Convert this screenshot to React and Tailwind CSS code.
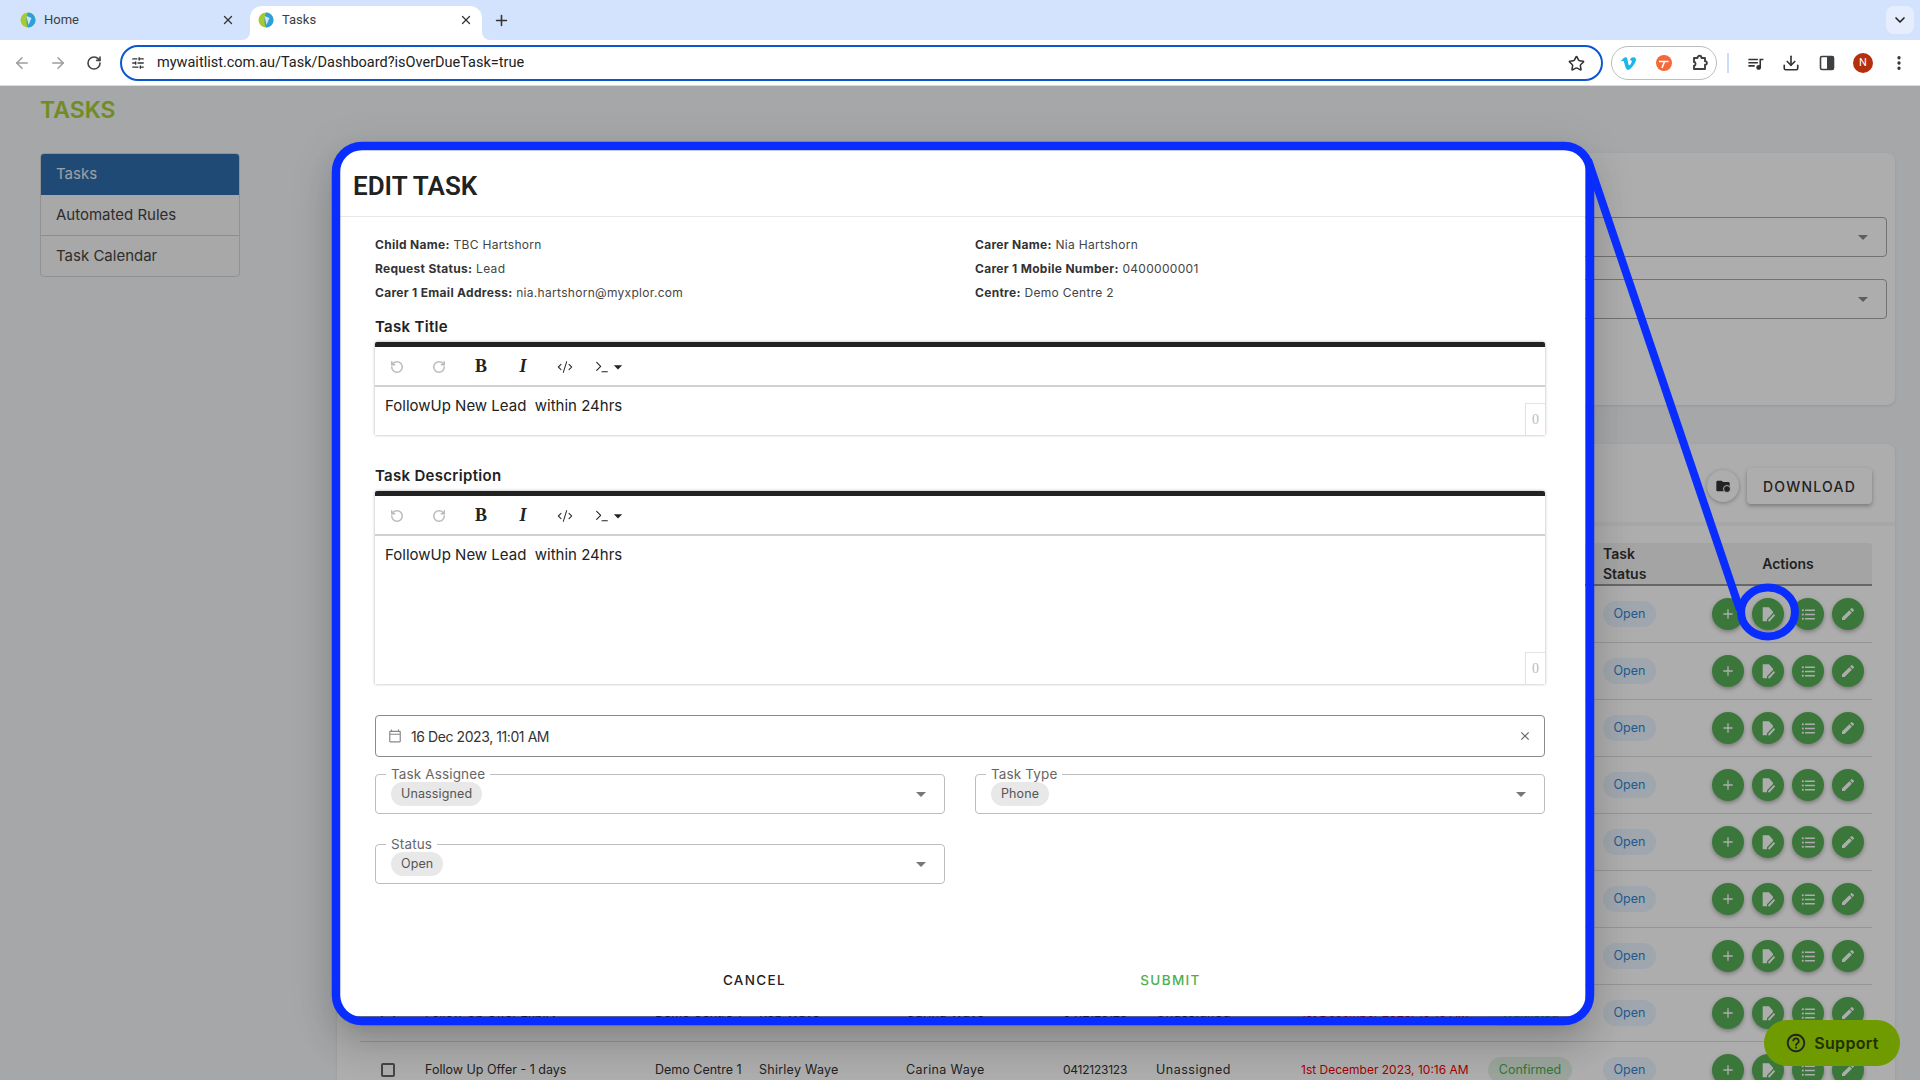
import React from "react";
import { ArrowLeft, ArrowRight, RotateCw, RotateCcw, X, Plus, Star, ChevronDown, Download, EllipsisVertical, SlidersHorizontal, CodeXml, Terminal } from "lucide-react";
import { MdAdd, MdFormatListBulleted, MdEdit, MdArrowDropDown, MdClose, MdFolder, MdOutlineCalendarToday, MdHelpOutline, MdQueueMusic } from "react-icons/md";
import { FaVimeoV } from "react-icons/fa";

const Favicon = () => (
  <svg viewBox="0 0 16 16" className="w-4 h-4 shrink-0">
    <circle cx="8" cy="8" r="7.5" fill="#a8c92f" />
    <path d="M8 .5a7.5 7.5 0 0 1 0 15c-2-3-2-11 0-15z" fill="#2f9fd8" />
    <path d="M6.5 4l5 2-3 7z" fill="#fff" opacity=".75" />
  </svg>
);

const Tab = ({ title, active }) => (
  <div className={`relative flex items-center w-[232px] h-[34px] rounded-t-xl pl-2 pr-2 pb-[6px] ${active ? "bg-white" : ""}`}>
    {active && (
      <>
        <div className="absolute bottom-0 -left-2 w-2 h-2 bg-white"><div className="w-2 h-2 bg-[#d3e3fd] rounded-br-lg" /></div>
        <div className="absolute bottom-0 -right-2 w-2 h-2 bg-white"><div className="w-2 h-2 bg-[#d3e3fd] rounded-bl-lg" /></div>
      </>
    )}
    <Favicon />
    <span className="ml-2 text-[13px] text-[#3c4043] flex-1 font-['Roboto',sans-serif]">{title}</span>
    <X className="w-[14px] h-[14px] text-[#333] mr-[1px]" strokeWidth={2.2} />
  </div>
);

const ToolIcon = ({ children }) => <div className="w-9 h-9 flex items-center justify-center shrink-0">{children}</div>;

const Chrome = () => (
  <div className="font-['Roboto',sans-serif]">
    <div className="h-10 bg-[#d3e3fd] flex items-end pl-3 relative">
      <div className="mr-[6px]"><Tab title="Home" /></div>
      <Tab title="Tasks" active />
      <Plus className="w-[17px] h-[17px] ml-[11px] mb-[11px] text-[#333]" strokeWidth={2.2} />
      <div className="ml-auto mr-[6px] mb-[6px] w-7 h-7 rounded-lg bg-[#e6eefd] flex items-center justify-center">
        <ChevronDown className="w-4 h-4 text-[#222]" strokeWidth={2.5} />
      </div>
    </div>
    <div className="h-[46px] bg-white border-b border-[#dcdcdc] flex items-center pl-1 pt-[1px] relative">
      <ToolIcon><ArrowLeft className="w-[18px] h-[18px] text-[#9a9da1]" /></ToolIcon>
      <ToolIcon><ArrowRight className="w-[18px] h-[18px] text-[#9a9da1]" /></ToolIcon>
      <ToolIcon><RotateCw className="w-4 h-4 text-[#444]" strokeWidth={2.4} /></ToolIcon>
      <div className="ml-2 w-[1483px] h-9 border-2 border-[#0b57d0] rounded-full flex items-center pl-[9px] pr-[16px] shrink-0">
        <SlidersHorizontal className="w-[14px] h-[14px] text-[#333]" strokeWidth={2.2} />
        <span className="ml-3 text-[14.5px] text-[#202124] flex-1">mywaitlist.com.au/Task/Dashboard?isOverDueTask=true</span>
        <Star className="w-[17px] h-[17px] text-[#333]" strokeWidth={2.2} />
      </div>
      <div className="ml-2 w-[106px] h-[34px] border border-[#bdbdbd] rounded-full flex items-center justify-between pl-2 pr-[7px] shrink-0">
        <FaVimeoV className="w-[17px] h-[17px] text-[#1ab7ea]" />
        <svg viewBox="0 0 16 16" className="w-4 h-4">
          <circle cx="8" cy="8" r="8" fill="#f4683a" />
          <path d="M3 6.5h9.5M8.5 6.5L6 13" stroke="#fff" strokeWidth="1.6" fill="none" />
        </svg>
        <svg viewBox="0 0 18 18" className="w-[18px] h-[18px]" fill="none" stroke="#3c4043" strokeWidth="1.9">
          <path d="M3 4h3.5c0-3 4-3 4 0H14v3.2c2.5-.3 2.5 3.9 0 3.6V15H3v-3.2c2 .3 2-4.2 0-3.8z" strokeLinejoin="round" />
        </svg>
      </div>
      <div className="ml-[10px] mr-[8px] w-[2px] h-5 bg-[#c9dafb]" />
      <ToolIcon><MdQueueMusic className="w-[19px] h-[19px] text-[#333]" /></ToolIcon>
      <ToolIcon><Download className="w-[18px] h-[18px] text-[#333]" strokeWidth={2.2} /></ToolIcon>
      <ToolIcon>
        <svg viewBox="0 0 16 16" className="w-4 h-4"><rect x="1.5" y="1.5" width="13" height="13" rx="1.5" fill="#fff" stroke="#3c4043" strokeWidth="1.6" /><rect x="8" y="1.5" width="6.5" height="13" fill="#3c4043" /></svg>
      </ToolIcon>
      <ToolIcon><div className="w-5 h-5 rounded-full bg-[#b52e0e] text-white text-[11px] leading-5 text-center">N</div></ToolIcon>
      <ToolIcon><EllipsisVertical className="w-[18px] h-[18px] text-[#333]" strokeWidth={2.4} /></ToolIcon>
    </div>
  </div>
);

const hidden = Array.from({ length: 7 }).map(() => []);
const offer = ["Follow Up Offer Expiry", "Demo Centre 1", "Rob Waye", "Carina Waye", "0412123123", "Unassigned", "1st December 2023, 10:16 AM", "Waitlisted"];
const last = ["Follow Up Offer - 1 days", "Demo Centre 1", "Shirley Waye", "Carina Waye", "0412123123", "Unassigned", "1st December 2023, 10:16 AM", "Confirmed"];

const NoteIcon = () => (
  <svg viewBox="0 0 16 16" className="w-4 h-4" fill="#fff">
    <path d="M2.7 1.3H9l4 4.5v1.2L7 13.2v2H2.7z" />
    <path d="M8.6 15l5.9-6.3" stroke="#fff" strokeWidth="1.9" fill="none" />
  </svg>
);

const Round = ({ children }) => (
  <div className="w-8 h-8 rounded-full bg-[#58b058] flex items-center justify-center text-white shadow-[0_2px_4px_rgba(0,0,0,.3)]">{children}</div>
);

const Row = ({ r }) => (
  <div className="grid grid-cols-[65px_230px_104px_147px_157px_93px_145px_187px_115px_109px_160px] h-[57px] items-center border-b border-[#dcdcdc] text-[12.5px] text-[#333]">
    <div className="pl-[21px]">{r[0] && <div className="w-[14px] h-[14px] border-2 border-[#666] rounded-[2px]" />}</div>
    <div className="whitespace-nowrap overflow-hidden">{r[0]}</div>
    <div className="whitespace-nowrap">{r[1]}</div>
    <div className="tracking-[0.02em]">{r[2]}</div>
    <div className="tracking-[0.03em]">{r[3]}</div>
    <div className="text-[12px] tracking-[-0.02em]">{r[4]}</div>
    <div className="tracking-[0.04em]">{r[5]}</div>
    <div className="text-[#f00000] text-[12px] whitespace-nowrap">{r[6]}</div>
    <div>{r[7] && <span className="inline-flex h-[26px] w-[84px] items-center justify-center rounded-full bg-[#e4f2e5] text-[#4caf50]">{r[7]}</span>}</div>
    <div><span className="inline-flex h-[26px] w-[53px] items-center justify-center rounded-full bg-[#ebf5ff] text-[#2f86d6]">Open</span></div>
    <div className="flex gap-2">
      <Round><MdAdd className="w-4 h-4" /></Round>
      <Round><NoteIcon /></Round>
      <Round><MdFormatListBulleted className="w-[17px] h-[17px]" /></Round>
      <Round><MdEdit className="w-4 h-4" /></Round>
    </div>
  </div>
);

const BgSelect = () => (
  <div className="h-10 border border-[#a8a8a8] rounded flex items-center justify-end pr-[11px]">
    <MdArrowDropDown className="w-6 h-6 text-[#8a8a8a]" />
  </div>
);

const Background = () => (
  <div className="h-[994px] bg-[#f4f6f8] flex pl-10 pr-[25px] font-['Inter',sans-serif] overflow-hidden">
    <div className="w-[200px] shrink-0">
      <div className="mt-[11px] h-[27px] leading-[27px] text-[23px] font-semibold text-[#a8ce35]">TASKS</div>
      <div className="mt-[29px] rounded border border-[#d8d8d8] bg-[#f8f8f8] overflow-hidden text-[15px] text-[#444]">
        <div className="h-[41px] pl-[15px] flex items-center bg-[#306eae] text-[#e8edf2]">Tasks</div>
        <div className="h-[41px] pl-[15px] flex items-center border-b border-[#cfcfcf]">Automated Rules</div>
        <div className="h-[40px] pl-[15px] flex items-center">Task Calendar</div>
      </div>
    </div>
    <div className="ml-[97px] flex-1 pt-[67px]">
      <div className="h-[252px] bg-white rounded-lg pt-[64px] pr-2 flex flex-col gap-[22px] shadow-[0_1px_3px_rgba(0,0,0,.1)]">
        <BgSelect />
        <BgSelect />
      </div>
      <div className="mt-[39px] bg-white rounded-lg h-[700px] shadow-[0_1px_3px_rgba(0,0,0,.1)]">
        <div className="h-[82px] border-b-4 border-[#f6f6f6] flex items-start justify-end pt-6 pr-[23px] gap-2">
          <div className="relative w-8 h-8 mt-[2px] rounded-full bg-white shadow-[0_1px_4px_rgba(0,0,0,.3)] flex items-center justify-center">
            <MdFolder className="w-[16px] h-[16px] text-[#333]" />
            <div className="absolute left-[16px] top-[15px] w-2 h-2 rounded-full bg-[#333] border border-white" />
          </div>
          <div className="w-[125px] h-9 rounded bg-white shadow-[0_2px_4px_rgba(0,0,0,.3)] flex items-center justify-center text-[14px] font-medium tracking-[0.09em] text-[#333]">DOWNLOAD</div>
        </div>
        <div className="ml-[23px] mr-[23px] mt-[17px]">
          <div className="grid grid-cols-[1243px_109px_160px] h-[43px] items-center rounded-t bg-[#f2f2f2] border-b-2 border-[#999] text-[14px] font-semibold leading-[20px] text-[#333]">
            <div />
            <div className="w-[60px]">Task Status</div>
            <div className="text-center pr-2">Actions</div>
          </div>
          {hidden.map((r, i) => <Row key={i} r={r} />)}
          <Row r={offer} />
          <Row r={last} />
        </div>
      </div>
    </div>
  </div>
);

const TBtn = ({ children }) => <div className="w-[42px] h-full flex items-center justify-center shrink-0">{children}</div>;

const Editor = ({ h }) => (
  <div className="relative border-t-[5px] border-[#222] rounded-t-[2px] shadow-[0_0_3px_rgba(0,0,0,.35)]">
    <div className="h-[40px] flex items-center pl-[1px] pt-[1px] border-b-2 border-[#d0d0d0]">
      <TBtn><RotateCcw className="w-[14px] h-[14px] text-[#bbb]" strokeWidth={2.6} /></TBtn>
      <TBtn><RotateCw className="w-[14px] h-[14px] text-[#bbb]" strokeWidth={2.6} /></TBtn>
      <TBtn><span className="text-[18px] font-bold text-[#222] font-['Liberation_Serif',serif]">B</span></TBtn>
      <TBtn><span className="text-[18px] font-bold italic text-[#222] font-['Liberation_Serif',serif]">I</span></TBtn>
      <TBtn><CodeXml className="w-4 h-4 text-[#333]" strokeWidth={1.6} /></TBtn>
      <div className="flex items-center text-[#222] ml-[8px]">
        <Terminal className="w-[16px] h-[16px]" strokeWidth={1.6} />
        <MdArrowDropDown className="w-5 h-5 -ml-[2px]" />
      </div>
    </div>
    <div className={`${h} px-[10px] pt-[7px] text-[15px] leading-[24px] text-[#222] whitespace-pre`}>FollowUp New Lead  within 24hrs</div>
    <div className="absolute right-0 bottom-0 w-5 h-8 border-l border-t border-[#e2e2e2] text-center text-[14px] leading-8 text-[#bbb] font-['Liberation_Serif',serif]">0</div>
  </div>
);

const Select = ({ label, value }) => (
  <div className="relative h-10 border border-[#bdbdbd] rounded flex items-center pl-[15px] pr-[11px]">
    <div className="absolute -top-[9px] left-[10px] bg-white px-[5px] text-[13.5px] tracking-[0.01em] leading-4 text-[#666]">{label}</div>
    <div className="h-6 px-[10px] rounded-full bg-[#e8e8e8] text-[12.5px] tracking-[0.01em] leading-6 text-[#555]">{value}</div>
    <MdArrowDropDown className="w-6 h-6 ml-auto text-[#777]" />
  </div>
);

const Info = ({ k, v }) => (
  <div className="h-6 leading-6 text-[12px] text-[#444] tracking-[0.025em] whitespace-nowrap"><span className="font-bold text-[#333]">{k}:</span> {v}</div>
);

const Modal = () => (
  <div className="absolute left-[340px] top-[150px] w-[1245px] h-[866px] bg-white rounded-2xl font-['Inter',sans-serif] shadow-[0_11px_15px_-7px_rgba(0,0,0,.2),0_24px_38px_3px_rgba(0,0,0,.14),0_9px_46px_8px_rgba(0,0,0,.12)]">
    <div className="h-[67px] border-b border-[#e8e8e8] pl-[13px] pt-[7px] flex items-center font-['Roboto',sans-serif] text-[26px] font-semibold text-[#222]">EDIT TASK</div>
    <div className="pl-[35px] pr-[40px] pt-4">
      <div className="grid grid-cols-2 gap-x-[30px]">
        <Info k="Child Name" v="TBC Hartshorn" />
        <Info k="Carer Name" v="Nia Hartshorn" />
        <Info k="Request Status" v="Lead" />
        <Info k="Carer 1 Mobile Number" v="0400000001" />
        <Info k="Carer 1 Email Address" v="nia.hartshorn@myxplor.com" />
        <Info k="Centre" v="Demo Centre 2" />
      </div>
      <div className="mt-3 h-5 leading-5 text-[15px] tracking-[0.02em] font-semibold text-[#222] mb-[5px]">Task Title</div>
      <Editor h="h-[48px]" />
      <div className="mt-[31px] h-5 leading-5 text-[15px] tracking-[0.02em] font-semibold text-[#222] mb-[5px]">Task Description</div>
      <Editor h="h-[148px]" />
      <div className="mt-[31px] h-[42px] border border-[#8a8a8a] rounded flex items-center pl-[12px] pr-[12px]">
        <MdOutlineCalendarToday className="w-[14px] h-[14px] text-[#888]" />
        <span className="ml-[9px] text-[14px] tracking-[-0.03em] text-[#333]">16 Dec 2023, 11:01 AM</span>
        <MdClose className="w-[14px] h-[14px] ml-auto text-[#666]" />
      </div>
      <div className="mt-[17px] grid grid-cols-2 gap-x-[30px] gap-y-[30px]">
        <Select label="Task Assignee" value="Unassigned" />
        <Select label="Task Type" value="Phone" />
        <Select label="Status" value="Open" />
      </div>
      <div className="mt-[84px] -mr-[5px] flex justify-center text-[13.5px] font-medium tracking-[0.1em] leading-6">
        <div className="w-[416px] text-center text-[#222]">CANCEL</div>
        <div className="w-[416px] text-center text-[#4caf50]">SUBMIT</div>
      </div>
    </div>
  </div>
);

const Annotation = () => (
  <svg className="absolute left-0 top-0 pointer-events-none" width="1920" height="1080" viewBox="0 0 1920 1080" fill="none" stroke="#0a2dff" strokeWidth="8">
    <rect x="336" y="146" width="1254" height="875" rx="26" strokeWidth="8.5" />
    <path d="M1588 160L1740 610" />
    <ellipse cx="1768" cy="612" rx="27" ry="24.5" />
  </svg>
);

export default function App() {
  return (
    <div className="relative w-[1920px] h-[1080px] overflow-hidden bg-white">
      <Chrome />
      <div className="relative">
        <Background />
        <div className="absolute inset-0 bg-black/32" />
      </div>
      <Modal />
      <Annotation />
      <div className="absolute left-[1764px] top-[1020px] w-[136px] h-[46px] rounded-full bg-[#6f9a00] flex items-center justify-center gap-[7px] text-[#223000] font-['Inter',sans-serif] text-[16px] font-semibold tracking-[0.02em]">
        <MdHelpOutline className="w-[22px] h-[22px] text-[#222]" />
        Support
      </div>
    </div>
  );
}
